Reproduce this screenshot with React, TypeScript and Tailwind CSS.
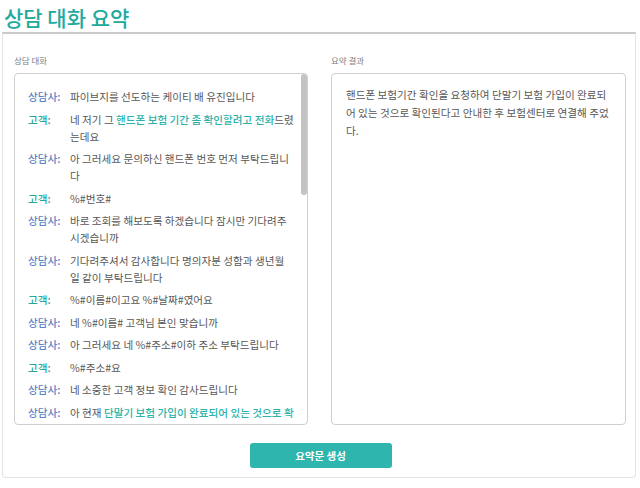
import React from "react";

type Seg = { t: string; hl?: boolean } | "br";
type Row = { who: "agent" | "cust"; segs: Seg[] };

const rows: Row[] = [
  { who: "agent", segs: [{ t: "파이브지를 선도하는 케이티 배 유진입니다" }] },
  {
    who: "cust",
    segs: [
      { t: "네 저기 그 " },
      { t: "핸드폰 보험 기간 좀 확인할려고 전화", hl: true },
      { t: "드렸" },
      "br",
      { t: "는데요" },
    ],
  },
  { who: "agent", segs: [{ t: "아 그러세요 문의하신 핸드폰 번호 먼저 부탁드립니" }, "br", { t: "다" }] },
  { who: "cust", segs: [{ t: "%#번호#" }] },
  { who: "agent", segs: [{ t: "바로 조회를 해보도록 하겠습니다 잠시만 기다려주" }, "br", { t: "시겠습니까" }] },
  { who: "agent", segs: [{ t: "기다려주셔서 감사합니다 명의자분 성함과 생년월" }, "br", { t: "일 같이 부탁드립니다" }] },
  { who: "cust", segs: [{ t: "%#이름#이고요 %#날짜#였어요" }] },
  { who: "agent", segs: [{ t: "네 %#이름# 고객님 본인 맞습니까" }] },
  { who: "agent", segs: [{ t: "아 그러세요 네 %#주소#이하 주소 부탁드립니다" }] },
  { who: "cust", segs: [{ t: "%#주소#요" }] },
  { who: "agent", segs: [{ t: "네 소중한 고객 정보 확인 감사드립니다" }] },
  {
    who: "agent",
    segs: [
      { t: "아 현재 " },
      { t: "단말기 보험 가입이 완료되어 있는 것으로 확", hl: true },
      "br",
      { t: "인되십니다", hl: true },
    ],
  },
];

export default function App() {
  return (
    <div className="w-[640px] h-[488px] bg-white font-['Noto_Sans_CJK_KR','Noto_Sans',sans-serif] overflow-hidden">
      <div className="h-[32px] pl-[4px] pt-[5px] text-[21px] leading-[24px] font-medium text-[#22a99e]">
        상담 대화 요약
      </div>
      <div className="ml-[2px] w-[634px] h-[446px] border border-[#e3e3e3] border-t-2 border-t-[#cacaca] rounded-b-[4px] pl-[11px] pr-[9px]">
        <div className="grid grid-cols-[294px_295px] gap-x-[23px]">
          <div>
            <div className="mt-[20px] h-[12px] text-[8.5px] leading-[12px] text-[#808080]">상담 대화</div>
            <div className="relative mt-[7px] h-[352px] border border-[#cfcfcf] rounded-[4px] overflow-hidden pt-[14px] pl-[13px]">
              <div className="flex flex-col gap-[5.5px]">
                {rows.map((r, i) => (
                  <div key={i} className="flex text-[10.6px] leading-[17px]">
                    <div
                      className={
                        "w-[42px] shrink-0 font-medium " +
                        (r.who === "agent" ? "text-[#5b84c6]" : "text-[#25a79d]")
                      }
                    >
                      {r.who === "agent" ? "상담사:" : "고객:"}
                    </div>
                    <div className="whitespace-nowrap text-[#575757]">
                      {r.segs.map((s, j) =>
                        s === "br" ? (
                          <br key={j} />
                        ) : s.hl ? (
                          <span key={j} className="text-[#2ab2a9] font-medium">
                            {s.t}
                          </span>
                        ) : (
                          <span key={j}>{s.t}</span>
                        )
                      )}
                    </div>
                  </div>
                ))}
              </div>
              <div className="absolute right-[0px] top-[0px] w-[6px] h-[121px] rounded-[3px] bg-[#c3c3c3]" />
            </div>
          </div>
          <div>
            <div className="mt-[20px] h-[12px] text-[8.5px] leading-[12px] text-[#808080]">요약 결과</div>
            <div className="mt-[7px] h-[352px] border border-[#cfcfcf] rounded-[4px] pt-[12px] pl-[14px] text-[10.6px] leading-[18px] text-[#575757] whitespace-nowrap">
              핸드폰 보험기간 확인을 요청하여 단말기 보험 가입이 완료되
              <br />
              어 있는 것으로 확인된다고 안내한 후 보험센터로 연결해 주었
              <br />
              다.
            </div>
          </div>
        </div>
        <div className="mt-[18px] flex justify-center">
          <button className="w-[142px] h-[25px] rounded-[3px] bg-[#2db5ae] text-white text-[10.5px] font-bold leading-[25px] ml-[1px]">
            요약문 생성
          </button>
        </div>
      </div>
    </div>
  );
}
